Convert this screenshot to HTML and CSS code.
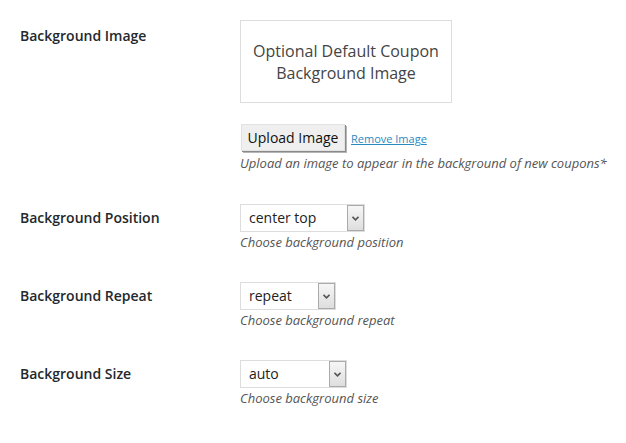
FILE: index.html
```html
<!DOCTYPE html>
<html>
<head>
<meta charset="utf-8">
<link rel="stylesheet" href="styles.css">
</head>
<body>
<div class="form">
  <div class="row row-first">
    <div class="label label-top">Background Image</div>
    <div class="field">
      <div class="preview">Optional Default Coupon<br>Background Image</div>
      <div class="actions">
        <span class="button">Upload Image</span>
        <a class="remove" href="#">Remove Image</a>
      </div>
      <div class="desc">Upload an image to appear in the background of new coupons*</div>
    </div>
  </div>
  <div class="row">
    <div class="label">Background Position</div>
    <div class="field">
      <div class="select sel-position"><span class="val">center top</span><span class="arrow"><svg width="7" height="5" viewBox="0 0 7 5"><path d="M0.5 0.8 L3.5 3.8 L6.5 0.8" fill="none" stroke="#555" stroke-width="1.6"/></svg></span></div>
      <div class="desc">Choose background position</div>
    </div>
  </div>
  <div class="row">
    <div class="label">Background Repeat</div>
    <div class="field">
      <div class="select sel-repeat"><span class="val">repeat</span><span class="arrow"><svg width="7" height="5" viewBox="0 0 7 5"><path d="M0.5 0.8 L3.5 3.8 L6.5 0.8" fill="none" stroke="#555" stroke-width="1.6"/></svg></span></div>
      <div class="desc">Choose background repeat</div>
    </div>
  </div>
  <div class="row">
    <div class="label">Background Size</div>
    <div class="field">
      <div class="select sel-size"><span class="val">auto</span><span class="arrow"><svg width="7" height="5" viewBox="0 0 7 5"><path d="M0.5 0.8 L3.5 3.8 L6.5 0.8" fill="none" stroke="#555" stroke-width="1.6"/></svg></span></div>
      <div class="desc">Choose background size</div>
    </div>
  </div>
</div>
</body>
</html>
```
FILE: styles.css
```css
html, body {
  margin: 0;
  padding: 0;
  background: #fff;
}
body {
  font-family: "Open Sans", "Noto Sans", sans-serif;
  color: #23282d;
}
.form {
  padding: 20px 0 0 20px;
}
.row {
  display: flex;
  margin-top: 31px;
}
.row-first {
  margin-top: 0;
  padding-bottom: 1px;
}
.label {
  width: 220px;
  flex: none;
  font-size: 14px;
  font-weight: 600;
  line-height: 28px;
  color: #23282d;
}
.label-top {
  line-height: 20px;
  padding-top: 6px;
}
.field {
  display: flex;
  flex-direction: column;
  align-items: flex-start;
}
.preview {
  box-sizing: border-box;
  width: 212px;
  height: 83px;
  border: 1px solid #ddd;
  text-align: center;
  font-size: 16px;
  line-height: 22px;
  color: #444;
  padding-top: 19px;
}
.actions {
  margin-top: 21px;
  display: flex;
  align-items: baseline;
  height: 29px;
}
.button {
  box-sizing: border-box;
  display: inline-block;
  height: 27px;
  width: 104px;
  margin-left: 1px;
  background: #efefef;
  border: 1px solid #e2e2e2;
  box-shadow: 1px 1px 0 #8a8a8a, 2px 2px 0 #b5b5b5;
  font-size: 14px;
  line-height: 25px;
  text-align: center;
  color: #111;
}
.remove {
  margin-left: 6px;
  font-size: 11px;
  color: #2a8bc0;
  text-decoration: underline;
}
.desc {
  margin-top: 1px;
  font-size: 13px;
  font-style: italic;
  line-height: 18px;
  color: #555;
}
.select {
  box-sizing: border-box;
  height: 28px;
  display: flex;
  border: 1px solid #ddd;
  background: #fff;
}
.val {
  flex: 1;
  padding-left: 8px;
  font-size: 14px;
  line-height: 26px;
  color: #222;
}
.arrow {
  box-sizing: border-box;
  width: 17px;
  margin: 0;
  border: 1px solid #aaa;
  background: linear-gradient(#f6f6f6, #dedede);
  display: flex;
  align-items: center;
  justify-content: center;
}
.sel-position { width: 125px; }
.sel-repeat { width: 96px; }
.sel-size { width: 107px; }
```
